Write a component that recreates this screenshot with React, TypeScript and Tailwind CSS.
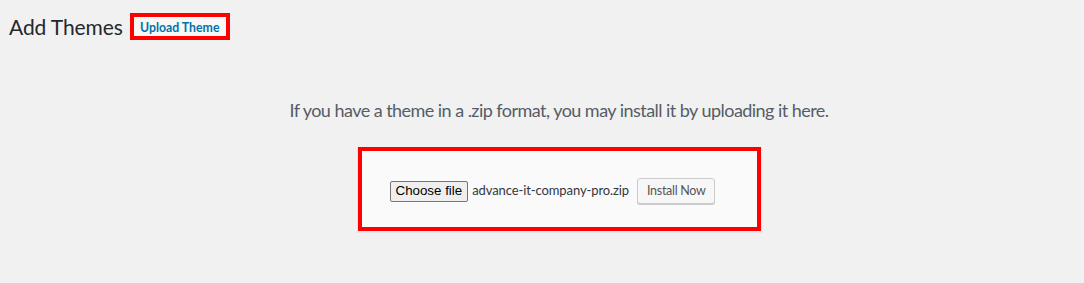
import React from 'react';

const uiFont = { fontFamily: 'Lato, "Open Sans", sans-serif' };

const App = () => {
  return (
    <div className="w-[1084px] h-[283px] bg-[#f1f1f1] overflow-hidden" style={uiFont}>
      {/* Page title row */}
      <div className="flex items-center pl-[9px] pt-[13px]">
        <h1 className="text-[21px] leading-[27px] font-normal tracking-[-0.1px] text-[#23282d]">Add Themes</h1>
        <button className="ml-[7px] h-[27px] w-[100px] pt-[4px] border-4 border-[#ff0000] bg-[#f7f7f7] text-[12.3px] font-bold text-[#0073aa] leading-none">
          Upload Theme
        </button>
      </div>

      {/* Upload area */}
      <div className="flex flex-col items-center pl-[34px]">
        <p className="mt-[58px] text-[18px] leading-[24px] tracking-[-0.54px] text-[#555d66]">
          If you have a theme in a .zip format, you may install it by uploading it here.
        </p>
        <div className="mt-[25px] w-[403px] h-[84px] pt-[4px] border-4 border-[#ff0000] bg-[#fafafa] shadow-[0_1px_0_1px_#e2e4e7] flex items-center pl-[28px]">
          <button
            className="h-[21px] px-[5px] border border-[#767676] rounded-[2px] bg-[#efefef] text-[13.33px] text-black leading-none"
            style={{ fontFamily: '"Liberation Sans", Arial, sans-serif' }}
          >
            Choose file
          </button>
          <span className="ml-[4px] text-[13px] tracking-[-0.1px] text-[#32373c]">advance-it-company-pro.zip</span>
          <button className="ml-[8px] h-[26px] px-[9px] pt-[1px] border border-[#cccccc] rounded-[3px] bg-[#f7f7f7] shadow-[0_1px_0_#cccccc] text-[12.5px] tracking-[-0.3px] text-[#555555] leading-none">
            Install Now
          </button>
        </div>
      </div>
    </div>
  );
};

export default App;
